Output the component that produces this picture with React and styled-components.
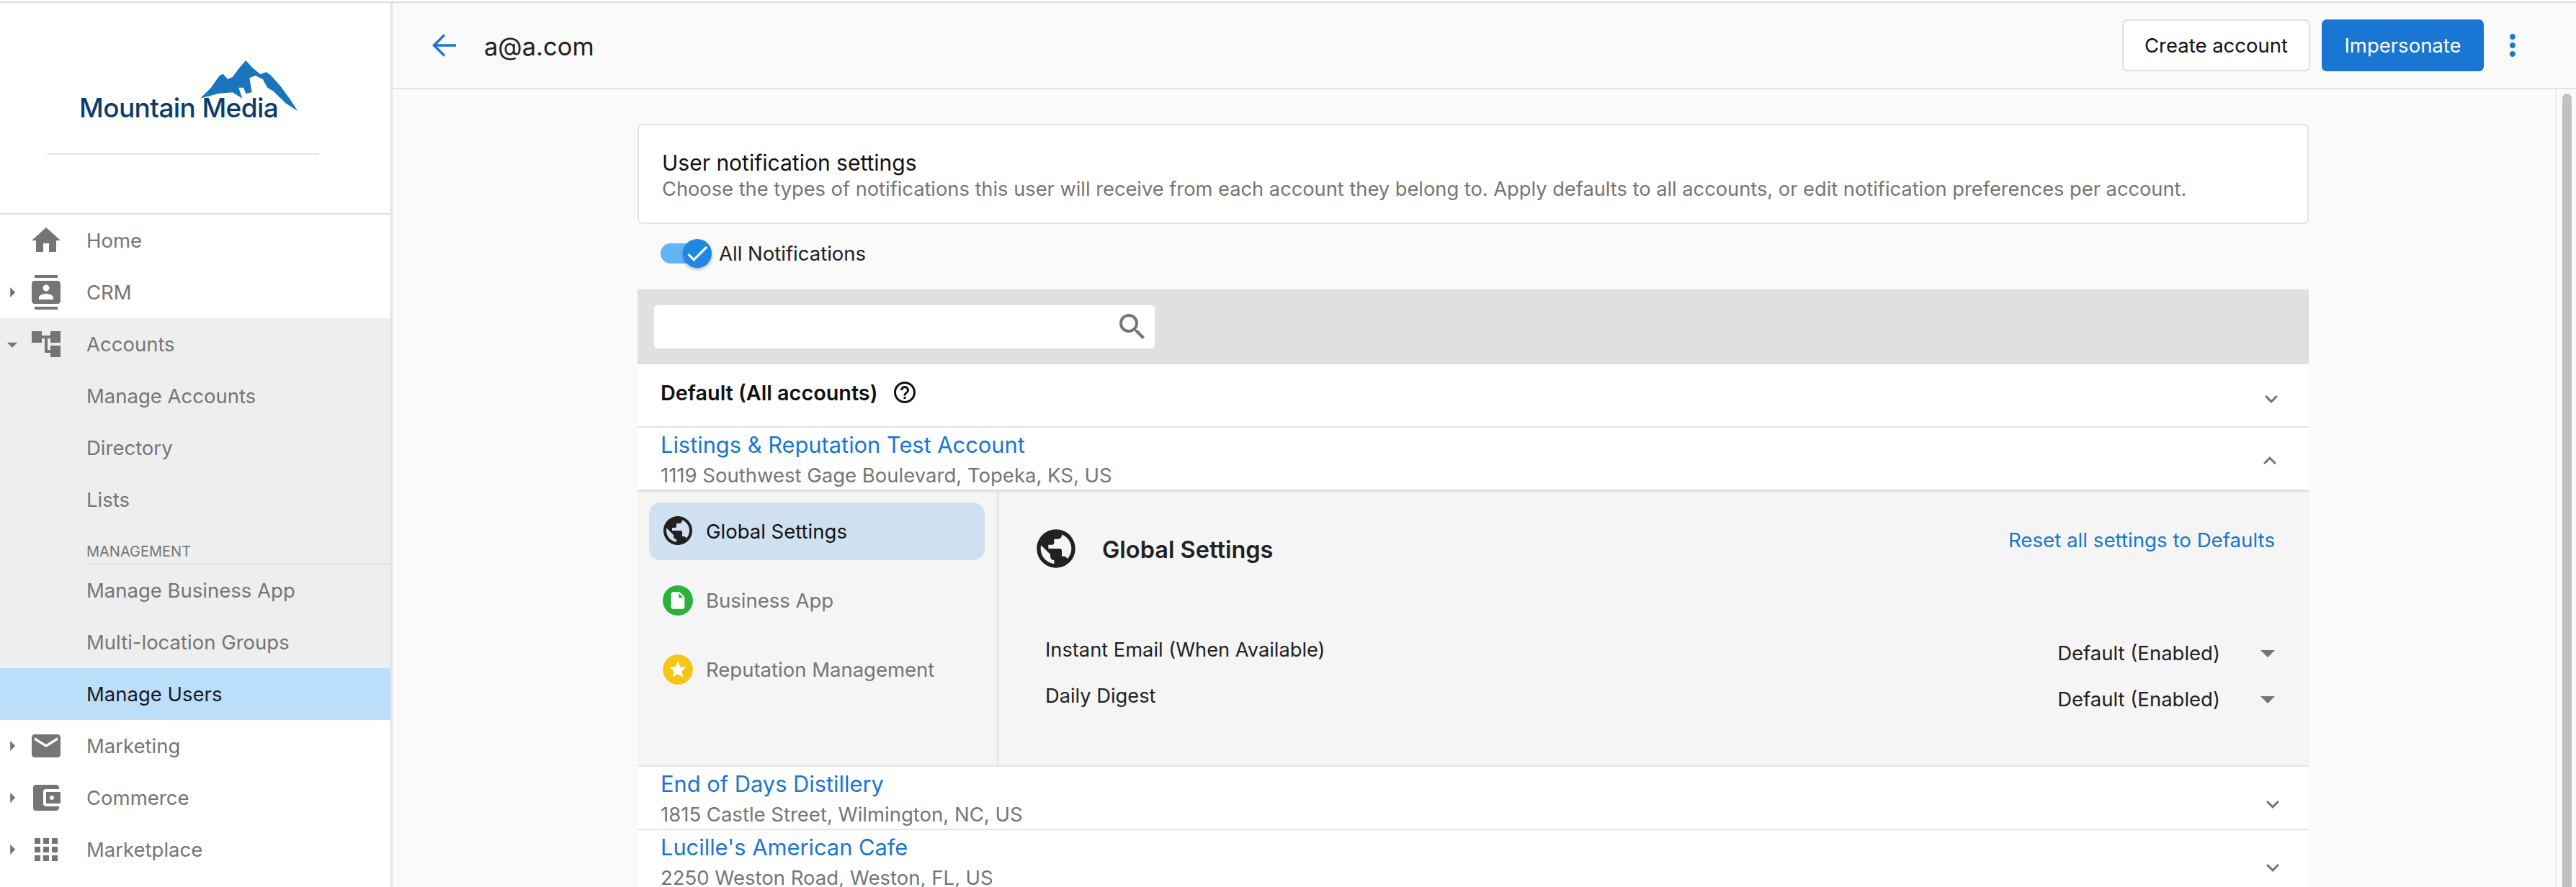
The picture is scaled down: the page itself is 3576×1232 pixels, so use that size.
import styled, { createGlobalStyle } from "styled-components";
import {
  MdHome,
  MdContacts,
  MdAccountTree,
  MdEmail,
  MdAccountBalanceWallet,
  MdApps,
  MdArrowRight,
  MdArrowDropDown,
  MdMoreVert,
  MdSearch,
  MdHelpOutline,
  MdExpandMore,
  MdExpandLess,
  MdPublic,
  MdInsertDriveFile,
  MdStar,
  MdCheck,
  MdAccountCircle,
} from "react-icons/md";

const GlobalStyle = createGlobalStyle`
  html, body {
    margin: 0;
    height: 100%;
    overflow: hidden;
    background: #fafafa;
    font-family: Inter, "Liberation Sans", sans-serif;
  }
  * { box-sizing: border-box; }
`;

const Page = styled.div`
  width: 3576px;
  height: 1232px;
  overflow: hidden;
  display: flex;
  flex-direction: column;
`;

const TopLine = styled.div`
  flex: none;
  height: 4px;
  background: #fff;
  border-bottom: 2px solid #dcdcdc;
`;

const Body = styled.div`
  flex: 1;
  min-height: 0;
  display: flex;
`;

const Sidebar = styled.aside`
  flex: none;
  width: 545px;
  background: #fff;
  border-right: 3px solid #e3e3e3;
  overflow: hidden;
`;

const LogoArea = styled.div`
  height: 294px;
  padding: 80px 0 0 110px;
  border-bottom: 2px solid #e0e0e0;
`;

const Logo = styled.div`
  position: relative;
  width: 303px;
  height: 86px;
  display: flex;
  align-items: flex-end;
`;

const LogoMark = styled.svg`
  position: absolute;
  top: 0;
  right: 0;
  width: 135px;
  height: 70px;
`;

const LogoText = styled.span`
  font-size: 37px;
  line-height: 40px;
  font-weight: 500;
  letter-spacing: -0.6px;
  color: #0a3d6e;
`;

const LogoRule = styled.div`
  width: 378px;
  height: 2px;
  margin: 43px 0 0 -45px;
  background: #e4e4e4;
`;

const NavRow = styled.div`
  height: 72px;
  display: flex;
  align-items: center;
  padding-left: ${(p) => (p.$sub ? "120px" : "0")};
  font-size: 27.5px;
  color: ${(p) => (p.$active ? "#1a1a1a" : "#757575")};
  background: ${(p) =>
    p.$active ? "#bbdefb" : p.$shaded ? "#eeeeee" : "transparent"};
`;

const CaretSlot = styled.span`
  flex: none;
  width: 34px;
  display: flex;
  justify-content: center;
  color: #757575;
  font-size: ${(p) => p.$size};
`;

const NavIcon = styled.span`
  flex: none;
  width: 60px;
  margin-right: 26px;
  display: flex;
  justify-content: center;
  color: #757575;
  font-size: 48px;
`;

const SectionLabel = styled.div`
  height: 54px;
  margin-left: 120px;
  padding-top: 24px;
  border-bottom: 2px solid #e0e0e0;
  font-size: 20px;
  line-height: 24px;
  color: #757575;
  background: #eeeeee;
`;

const SectionWrap = styled.div`
  background: #eeeeee;
`;

const Main = styled.main`
  flex: 1;
  min-width: 0;
  display: flex;
  flex-direction: column;
`;

const Header = styled.header`
  flex: none;
  height: 120px;
  display: flex;
  align-items: center;
  padding: 0 64px 0 55px;
  border-bottom: 2px solid #e3e3e3;
  background: #fafafa;
`;

const BackArrow = styled.svg`
  width: 33px;
  height: 32px;
  margin-right: 39px;
`;

const PageTitle = styled.h1`
  margin: 2px 0 0;
  font-size: 34.5px;
  font-weight: 400;
  color: #212121;
`;

const HeaderActions = styled.div`
  margin-left: auto;
  display: flex;
  align-items: center;
  gap: 16px;
`;

const Button = styled.button`
  height: 72px;
  width: ${(p) => p.$width};
  border-radius: 7px;
  border: 2px solid ${(p) => (p.$primary ? "#1976d2" : "#e0e0e0")};
  background: ${(p) => (p.$primary ? "#1976d2" : "#fff")};
  color: ${(p) => (p.$primary ? "#fff" : "#111")};
  font-family: inherit;
  font-size: 27.5px;
`;

const MoreButton = styled.span`
  display: flex;
  font-size: 48px;
  color: #1976d2;
`;

const ScrollRow = styled.div`
  flex: 1;
  min-height: 0;
  display: flex;
`;

const Content = styled.div`
  flex: 1;
  min-width: 0;
  padding: 48px 2px 0 0;
  overflow: hidden;
`;

const Column = styled.div`
  width: 2320px;
  margin: 0 auto;
`;

const Scrollbar = styled.div`
  flex: none;
  width: 29px;
  padding: 6px 6px 0 8px;
  border-left: 2px solid #ececec;
  background: #fafafa;
`;

const ScrollThumb = styled.div`
  height: 100%;
  border-radius: 8px 8px 0 0;
  background: #c1c1c1;
`;

const IntroCard = styled.section`
  height: 139px;
  padding: 32px 32px 0;
  background: #fff;
  border: 2px solid #e3e3e3;
  border-radius: 7px;
`;

const IntroTitle = styled.div`
  font-size: 30px;
  line-height: 40px;
  color: #111;
`;

const IntroText = styled.div`
  font-size: 27.25px;
  line-height: 34px;
  color: #757575;
`;

const ToggleRow = styled.div`
  height: 91px;
  padding: 0 0 10px 32px;
  display: flex;
  align-items: center;
  font-size: 27.5px;
  color: #212121;
`;

const Toggle = styled.span`
  position: relative;
  width: 50px;
  height: 28px;
  margin-right: 31px;
  border-radius: 14px;
  background: #64b5f6;
`;

const ToggleKnob = styled.span`
  position: absolute;
  top: -6px;
  right: -21px;
  width: 40px;
  height: 40px;
  border-radius: 50%;
  display: flex;
  align-items: center;
  justify-content: center;
  font-size: 38px;
  color: #fff;
  background: #1e88e5;
  box-shadow: 0 2px 4px rgba(0, 0, 0, 0.3);
`;

const SearchBar = styled.div`
  height: 104px;
  padding: 22px 23px;
  background: #e0e0e0;
`;

const SearchBox = styled.div`
  width: 695px;
  height: 60px;
  padding-right: 7px;
  display: flex;
  align-items: center;
  justify-content: flex-end;
  border-radius: 5px;
  background: #fff;
  color: #757575;
  font-size: 48px;
`;

const AccountRow = styled.div`
  height: ${(p) => p.$height};
  padding: ${(p) => p.$top} ${(p) => p.$right} 0 32px;
  display: flex;
  justify-content: space-between;
  background: #fff;
  border-bottom: ${(p) => (p.$open ? "none" : "2px solid #e3e3e3")};
`;

const AccountName = styled.div`
  font-size: 30.8px;
  line-height: 40px;
  color: #1976d2;
`;

const AccountAddress = styled.div`
  font-size: 27.5px;
  line-height: 40px;
  margin-top: 2px;
  color: #757575;
`;

const DefaultLabel = styled.div`
  display: flex;
  align-items: center;
  height: 40px;
  font-size: 28.8px;
  font-weight: 600;
  color: #111;
`;

const HelpIcon = styled.span`
  display: flex;
  margin-left: 20px;
  font-size: 36px;
  color: #111;
`;

const Chevron = styled.span`
  display: flex;
  height: 40px;
  align-items: center;
  margin-top: ${(p) => p.$top || "0"};
  font-size: 36px;
  color: #757575;
`;

const Panel = styled.div`
  height: 385px;
  display: grid;
  grid-template-columns: 501px 1fr;
  background: #f5f5f5;
  box-shadow: inset 0 5px 4px -3px rgba(0, 0, 0, 0.14),
    inset 0 -3px 3px -2px rgba(0, 0, 0, 0.12);
`;

const PanelNav = styled.div`
  padding: 18px 17px 0 16px;
  display: flex;
  flex-direction: column;
  gap: 16px;
  border-right: 2px solid #e3e3e3;
`;

const PanelNavItem = styled.div`
  height: 80px;
  padding-left: 18px;
  display: flex;
  align-items: center;
  gap: 17px;
  border-radius: 16px;
  font-size: 27.5px;
  color: ${(p) => (p.$active ? "#111" : "#757575")};
  background: ${(p) => (p.$active ? "#cfe0f1" : "transparent")};
`;

const GlobeIcon = styled.span`
  display: flex;
  flex: none;
  margin: ${(p) => p.$margin || "0"};
  font-size: ${(p) => p.$size};
  color: #212121;
`;

const ProductIcon = styled.span`
  flex: none;
  width: 44px;
  height: 44px;
  display: flex;
  align-items: center;
  justify-content: center;
  border-radius: 50%;
  border: 1px solid #fff;
  color: #fff;
  font-size: 28px;
  background: ${(p) => p.$color};
`;

const PanelBody = styled.div`
  padding: 55px 47px 0 48px;
`;

const PanelHeader = styled.div`
  display: flex;
  align-items: flex-start;
  height: 54px;
`;

const PanelTitle = styled.div`
  margin: 2px 0 0 32px;
  font-size: 32.5px;
  line-height: 54px;
  font-weight: 600;
  color: #212121;
`;

const ResetLink = styled.a`
  margin-left: auto;
  font-size: 27.7px;
  line-height: 30px;
  color: #1976d2;
`;

const SettingsList = styled.div`
  margin-top: 86px;
`;

const SettingRow = styled.div`
  height: 64px;
  padding-left: 17px;
  display: flex;
  align-items: center;
  justify-content: space-between;
  font-size: 27.25px;
  color: #212121;
`;

const SettingLabel = styled.span`
  padding-bottom: 10px;
`;

const SettingSelect = styled.span`
  display: flex;
  align-items: center;
  gap: 42px;
  font-size: 27.5px;
  margin-right: -14px;
`;

const SelectCaret = styled.span`
  display: flex;
  font-size: 48px;
  color: #757575;
`;

const MountainPath =
  "M0 158 L45 113 L80 63 L95 56 L115 78 L135 68 L165 28 L190 0 L215 28 L250 58 L275 48 L295 63 L335 108 L375 163 L405 210 L355 178 L305 128 L280 113 L260 78 L230 63 L205 73 L215 133 L190 138 L180 113 L160 113 L175 158 L135 133 L75 138 Z";

const topNav = [
  { label: "Home", icon: <MdHome /> },
  { label: "CRM", icon: <MdContacts />, caret: "right" },
];

const accountNav = [
  { label: "Manage Accounts" },
  { label: "Directory" },
  { label: "Lists" },
];

const bottomNav = [
  { label: "Marketing", icon: <MdEmail /> },
  { label: "Commerce", icon: <MdAccountBalanceWallet /> },
  { label: "Marketplace", icon: <MdApps /> },
  { label: "", icon: <MdAccountCircle /> },
];

function TopNavRow({ item, shaded }) {
  return (
    <NavRow $shaded={shaded}>
      <CaretSlot $size={item.caret === "down" ? "43px" : "46px"}>
        {item.caret === "right" && <MdArrowRight />}
        {item.caret === "down" && <MdArrowDropDown />}
      </CaretSlot>
      <NavIcon>{item.icon}</NavIcon>
      {item.label}
    </NavRow>
  );
}

function App() {
  return (
    <Page>
      <GlobalStyle />
      <TopLine />
      <Body>
        <Sidebar>
          <LogoArea>
            <Logo>
              <LogoText>Mountain Media</LogoText>
              <LogoMark viewBox="0 0 405 210" preserveAspectRatio="none">
                <path d={MountainPath} fill="#1a75bc" />
              </LogoMark>
            </Logo>
            <LogoRule />
          </LogoArea>
          {topNav.map((item) => (
            <TopNavRow key={item.label} item={item} />
          ))}
          <TopNavRow
            shaded
            item={{ label: "Accounts", icon: <MdAccountTree />, caret: "down" }}
          />
          {accountNav.map((item) => (
            <NavRow $sub $shaded key={item.label}>
              {item.label}
            </NavRow>
          ))}
          <SectionWrap>
            <SectionLabel>MANAGEMENT</SectionLabel>
          </SectionWrap>
          <NavRow $sub $shaded>
            Manage Business App
          </NavRow>
          <NavRow $sub $shaded>
            Multi-location Groups
          </NavRow>
          <NavRow $sub $active>
            Manage Users
          </NavRow>
          {bottomNav.map((item) => (
            <TopNavRow key={item.label} item={{ ...item, caret: "right" }} />
          ))}
        </Sidebar>

        <Main>
          <Header>
            <BackArrow viewBox="0 0 33 32" fill="none">
              <path
                d="M33 16H3M17 1.5 2.5 16 17 30.5"
                stroke="#1976d2"
                strokeWidth="3.4"
              />
            </BackArrow>
            <PageTitle>a@a.com</PageTitle>
            <HeaderActions>
              <Button $width="261px">Create account</Button>
              <Button $primary $width="225px">
                Impersonate
              </Button>
              <MoreButton>
                <MdMoreVert />
              </MoreButton>
            </HeaderActions>
          </Header>

          <ScrollRow>
            <Content>
              <Column>
                <IntroCard>
                  <IntroTitle>User notification settings</IntroTitle>
                  <IntroText>
                    Choose the types of notifications this user will receive
                    from each account they belong to. Apply defaults to all
                    accounts, or edit notification preferences per account.
                  </IntroText>
                </IntroCard>

                <ToggleRow>
                  <Toggle>
                    <ToggleKnob>
                      <MdCheck />
                    </ToggleKnob>
                  </Toggle>
                  All Notifications
                </ToggleRow>

                <SearchBar>
                  <SearchBox>
                    <MdSearch />
                  </SearchBox>
                </SearchBar>

                <AccountRow $height="88px" $top="19px" $right="34px">
                  <DefaultLabel>
                    Default (All accounts)
                    <HelpIcon>
                      <MdHelpOutline />
                    </HelpIcon>
                  </DefaultLabel>
                  <Chevron $top="9px">
                    <MdExpandMore />
                  </Chevron>
                </AccountRow>

                <AccountRow $open $height="86px" $top="4px" $right="36px">
                  <div>
                    <AccountName>Listings &amp; Reputation Test Account</AccountName>
                    <AccountAddress>
                      1119 Southwest Gage Boulevard, Topeka, KS, US
                    </AccountAddress>
                  </div>
                  <Chevron $top="22px">
                    <MdExpandLess />
                  </Chevron>
                </AccountRow>

                <Panel>
                  <PanelNav>
                    <PanelNavItem $active>
                      <GlobeIcon $size="48px" $margin="-3px -2px 0">
                        <MdPublic />
                      </GlobeIcon>
                      Global Settings
                    </PanelNavItem>
                    <PanelNavItem>
                      <ProductIcon $color="#2bb13c">
                        <MdInsertDriveFile />
                      </ProductIcon>
                      Business App
                    </PanelNavItem>
                    <PanelNavItem>
                      <ProductIcon $color="#f5c518">
                        <MdStar />
                      </ProductIcon>
                      Reputation Management
                    </PanelNavItem>
                  </PanelNav>
                  <PanelBody>
                    <PanelHeader>
                      <GlobeIcon $size="64px" $margin="-5px 0 0">
                        <MdPublic />
                      </GlobeIcon>
                      <PanelTitle>Global Settings</PanelTitle>
                      <ResetLink>Reset all settings to Defaults</ResetLink>
                    </PanelHeader>
                    <SettingsList>
                      <SettingRow>
                        <SettingLabel>Instant Email (When Available)</SettingLabel>
                        <SettingSelect>
                          Default (Enabled)
                          <SelectCaret>
                            <MdArrowDropDown />
                          </SelectCaret>
                        </SettingSelect>
                      </SettingRow>
                      <SettingRow>
                        <SettingLabel>Daily Digest</SettingLabel>
                        <SettingSelect>
                          Default (Enabled)
                          <SelectCaret>
                            <MdArrowDropDown />
                          </SelectCaret>
                        </SettingSelect>
                      </SettingRow>
                    </SettingsList>
                  </PanelBody>
                </Panel>

                <AccountRow $height="88px" $top="4px" $right="32px">
                  <div>
                    <AccountName>End of Days Distillery</AccountName>
                    <AccountAddress>1815 Castle Street, Wilmington, NC, US</AccountAddress>
                  </div>
                  <Chevron $top="28px">
                    <MdExpandMore />
                  </Chevron>
                </AccountRow>

                <AccountRow $height="88px" $top="4px" $right="32px">
                  <div>
                    <AccountName>Lucille's American Cafe</AccountName>
                    <AccountAddress>2250 Weston Road, Weston, FL, US</AccountAddress>
                  </div>
                  <Chevron $top="28px">
                    <MdExpandMore />
                  </Chevron>
                </AccountRow>
              </Column>
            </Content>
            <Scrollbar>
              <ScrollThumb />
            </Scrollbar>
          </ScrollRow>
        </Main>
      </Body>
    </Page>
  );
}

export default App;
